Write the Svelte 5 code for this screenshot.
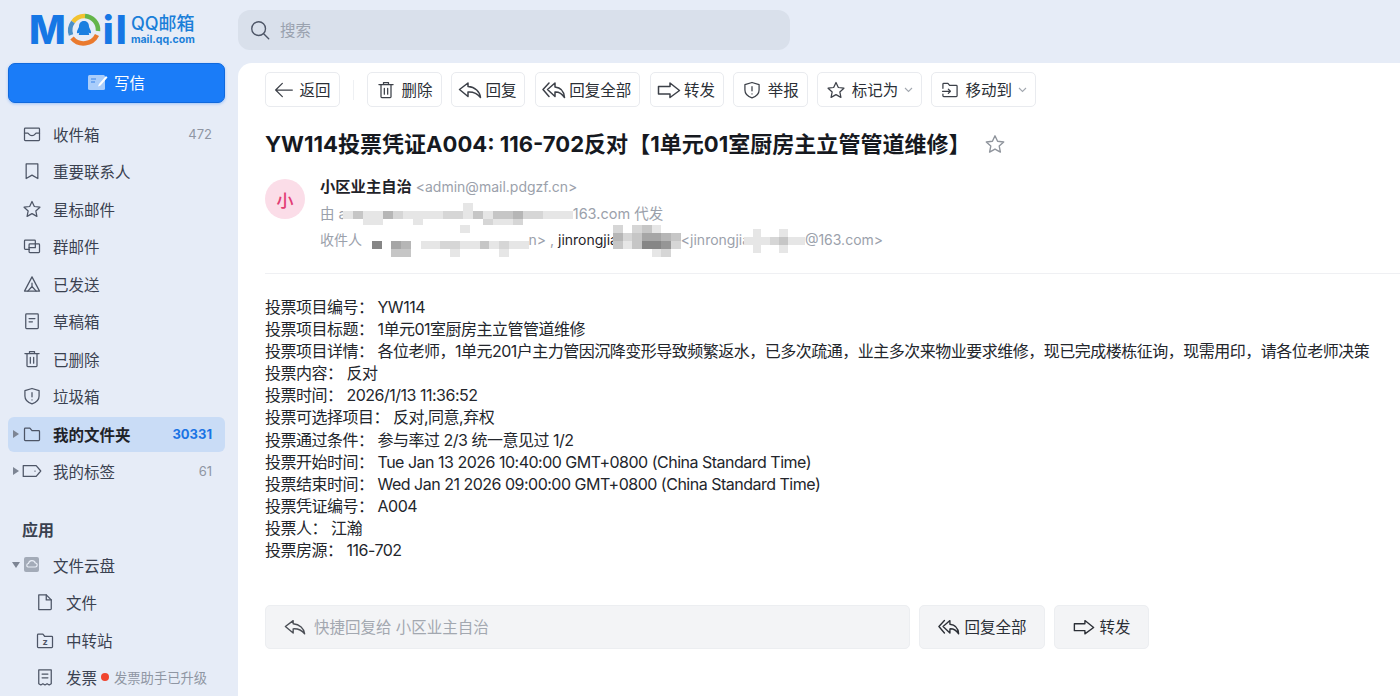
<script>
	const folders = [
		{ icon: "inbox", label: "收件箱", count: "472" },
		{ icon: "bookmark", label: "重要联系人" },
		{ icon: "star", label: "星标邮件" },
		{ icon: "group", label: "群邮件" },
		{ icon: "sent", label: "已发送" },
		{ icon: "draft", label: "草稿箱" },
		{ icon: "trash", label: "已删除" },
		{ icon: "shield", label: "垃圾箱" },
		{ icon: "folder", label: "我的文件夹", count: "30331", active: true, caret: "right" },
		{ icon: "tag", label: "我的标签", count: "61", caret: "right" },
	];

	const tools = [
		{ icon: "trash", label: "删除" },
		{ icon: "reply", label: "回复", wide: true },
		{ icon: "replyAll", label: "回复全部", wide: true },
		{ icon: "forward", label: "转发", wide: true },
		{ icon: "shield", label: "举报" },
		{ icon: "star", label: "标记为", menu: true },
		{ icon: "move", label: "移动到", menu: true },
	];

	const lines = [
		"投票项目编号： YW114",
		"投票项目标题： 1单元01室厨房主立管管道维修",
		"投票项目详情： 各位老师，1单元201户主力管因沉降变形导致频繁返水，已多次疏通，业主多次来物业要求维修，现已完成楼栋征询，现需用印，请各位老师决策",
		"投票内容： 反对",
		"投票时间： 2026/1/13 11:36:52",
		"投票可选择项目： 反对,同意,弃权",
		"投票通过条件： 参与率过 2/3 统一意见过 1/2",
		"投票开始时间： Tue Jan 13 2026 10:40:00 GMT+0800 (China Standard Time)",
		"投票结束时间： Wed Jan 21 2026 09:00:00 GMT+0800 (China Standard Time)",
		"投票凭证编号： A004",
		"投票人： 江瀚",
		"投票房源： 116-702",
	];

	// privacy blur blocks, one digit per cell = darkness
	const blurA = [
		"00000000000010000000000",
		"13114211112213133422111",
		"00110001000000211200000",
	];
	const blurB = [
		"00000000001000000",
		"00000000000000000",
		"07054011221131211",
		"00033000010000100",
	];
	const blurC = [
		"2023100",
		"4235543",
		"3137762",
		"0000120",
	];
	const blurD = [
		"0100100",
		"1112311",
		"0100100",
	];

	const shade = (cell) => {
		const v = cell === "0" ? 255 : 246 - cell * 16;
		return `rgb(${v}, ${v}, ${v})`;
	};
</script>

{#snippet icon(name, size = 20)}
	<svg class="icon" width={size} height={size} viewBox="0 0 24 24" fill="none" stroke="currentColor" stroke-width="1.500" stroke-linejoin="round" stroke-linecap="round">
		{#if name === "inbox"}
			<rect x="3" y="5" width="18" height="15" rx="1" />
			<path d="M3 11h4c1 0 1.500 3 5 3s4-3 5-3h4" />
		{:else if name === "bookmark"}
			<path d="M5 3.500h14V21l-7-4-7 4z" />
		{:else if name === "star"}
			<path d="M12 3l2.800 6 6.700.8-4.900 4.500 1.300 6.500L12 17.500 6.100 20.800l1.300-6.500L2.500 9.800 9.200 9z" />
		{:else if name === "group"}
			<path d="M9 16H4a1 1 0 0 1-1-1V6a1 1 0 0 1 1-1h11a1 1 0 0 1 1 1v3" />
			<rect x="8.500" y="9.500" width="12.500" height="10.500" rx="1" />
			<path d="M8.500 14H16V9.500" />
		{:else if name === "sent"}
			<path d="M12 3.500l9 17H3z" />
			<path d="M12 11v4l-5 5.500M12 15l5 5.500" />
		{:else if name === "draft"}
			<rect x="4.500" y="3.500" width="15" height="17.500" rx="1" />
			<path d="M8.500 9h7M8.500 13h4" />
		{:else if name === "trash"}
			<path d="M3.500 5.500h17M9 5.500V3h6v2.500M6 5.500V20a1 1 0 0 0 1 1h10a1 1 0 0 0 1-1V5.500M10 10v7M14 10v7" />
		{:else if name === "shield"}
			<path d="M12 3l8.500 2.500V12c0 5-4 8-8.500 9.500C7.500 20 3.500 17 3.500 12V5.500z" />
			<path d="M12 8v5M12 16.500v.2" />
		{:else if name === "folder"}
			<path d="M3 6a1 1 0 0 1 1-1h5.500l2.500 3h8a1 1 0 0 1 1 1v10a1 1 0 0 1-1 1H4a1 1 0 0 1-1-1z" />
		{:else if name === "tag"}
			<path d="M1.500 5.500h15.500l5.500 6.500-5.500 6.500H1.500z" />
			<path d="M15.500 12h.2" />
		{:else if name === "file"}
			<path d="M4.500 3.500h9l6 6V20a1 1 0 0 1-1 1h-14z" />
			<path d="M13.500 3.500v6h6" />
		{:else if name === "transfer"}
			<path d="M3 6a1 1 0 0 1 1-1h5.500l2 2.500H20a1 1 0 0 1 1 1V20a1 1 0 0 1-1 1H4a1 1 0 0 1-1-1z" />
			<text x="12" y="18.500" text-anchor="middle" font-size="11" font-weight="700" fill="currentColor" stroke="none" font-family="Inter, sans-serif">z</text>
		{:else if name === "receipt"}
			<path d="M4.500 3.500h15V20l-2.500 1.500-2.500-1.500-2.500 1.500L9.500 20 7 21.500 4.500 20z" />
			<path d="M8.500 8.500h7M8.500 13h7" />
		{:else if name === "back"}
			<path d="M22 12H2M10 4l-8 8 8 8" />
		{:else if name === "reply"}
			<path d="M10 5 1.500 11.500l8.500 7v-4.500c5-.3 9 1 12.500 5.500C22 13.500 17 9 10 8.500z" />
		{:else if name === "replyAll"}
			<path d="M7 5 1 11.500l6 7" />
			<path d="M13 5 5.500 11.500l7.500 7v-4.500c4-.3 6.500 1 9.500 5.500-.5-6-4-10-9.500-10.500z" />
		{:else if name === "forward"}
			<path d="M1.500 8.500H13V5l9.500 7.500L13 19.500v-3.500H1.500z" />
		{:else if name === "move"}
			<path d="M3.500 10V5a1 1 0 0 1 1-1h5l2 2.500h8a1 1 0 0 1 1 1V19a1 1 0 0 1-1 1h-15a1 1 0 0 1-1-1v-2" />
			<path d="M3 13.500h9.500M10 11l2.500 2.500L10 16" />
		{:else if name === "search"}
			<circle cx="10.500" cy="10.500" r="7.500" />
			<path d="M16 16l5.500 5.500" />
		{/if}
	</svg>
{/snippet}

{#snippet mosaic(rows, w = 10, over = 0)}
	<span class="mosaic" style="grid-template-columns: repeat({rows[0].length}, {w}px); margin-left: {-over}px">
		{#each rows as row}
			{#each row.split("") as cell}
				<i style="background: {shade(cell)}"></i>
			{/each}
		{/each}
	</span>
{/snippet}

{#snippet row(item, cls = "")}
	<div class="row {cls}" class:active={item.active}>
		<span class="caret {item.caret ?? ''}"></span>
		{@render icon(item.icon, 20)}
		<span class="label">{item.label}</span>
		{#if item.count}<span class="count">{item.count}</span>{/if}
	</div>
{/snippet}

<div class="page">
	<aside class="side">
		<div class="logo">
			<span class="word">M</span>
			<svg class="ring" width="36" height="36" viewBox="0 0 36 36" fill="none" stroke-width="4.500">
				<path d="M7 10A14 14 0 0 1 19 4" stroke="#f2c230" />
				<path d="M19 4A14 14 0 0 1 32 19" stroke="#64b54a" />
				<path d="M31 23A15 15 0 0 1 6 26" stroke="#ea7a2e" />
				<path d="M5 23A14 14 0 0 1 7 10" stroke="#4a90c8" />
				<path d="M18 9c3.500 0 5 2.500 5 5.500 0 1.500 2.500 4 2 6.500-1 .5-2 0-2.500-.5.500 1 1 2 .5 2.500H13c-.5-.5 0-1.500.5-2.500-.5.5-1.500 1-2.500.5-.5-2.500 2-5 2-6.500C13 11.500 14.500 9 18 9z" fill="#1b7fe0" stroke="none" />
			</svg>
			<span class="word il">il</span>
			<div class="brand">
				<span class="cn">QQ邮箱</span>
				<span class="en">mail.qq.com</span>
			</div>
		</div>

		<button class="compose">
			<svg width="20" height="18" viewBox="0 0 20 18">
				<rect x="0" y="1" width="17" height="15" rx="1.500" fill="#a9cdfb" />
				<path d="M3 5h5M3 8h4" stroke="#5d9cf0" stroke-width="1.500" />
				<path d="M18 2l1.500 1.500-7 8-2.500 1 1-2.500z" fill="#fff" />
			</svg>
			<span>写信</span>
		</button>

		<nav class="folders">
			{#each folders as f}
				{@render row(f)}
			{/each}
		</nav>

		<h3>应用</h3>
		<div class="row">
			<span class="caret down"></span>
			<svg class="icon" width="20" height="20" viewBox="0 0 20 20">
				<rect x="2" y="2" width="15" height="15" rx="2" fill="#a3abb8" />
				<path d="M6 12h7a2 2 0 0 0 .3-4A3.500 3.500 0 0 0 6.500 8.500 1.800 1.800 0 0 0 6 12z" fill="none" stroke="#e8edf6" stroke-width="1.200" />
			</svg>
			<span class="label">文件云盘</span>
		</div>
		{@render row({ icon: "file", label: "文件" }, "sub")}
		{@render row({ icon: "transfer", label: "中转站" }, "sub")}
		<div class="row sub">
			<span class="caret"></span>
			{@render icon("receipt", 20)}
			<span class="label">发票</span>
			<span class="dot"></span>
			<span class="note">发票助手已升级</span>
		</div>
	</aside>

	<div class="right">
		<header class="top">
			<div class="search">
				{@render icon("search", 22)}
				<span>搜索</span>
			</div>
		</header>

		<main class="panel">
			<div class="toolbar">
				<button class="tool">{@render icon("back")}<span class="txt">返回</span></button>
				<span class="sep"></span>
				{#each tools as t}
					<button class="tool" class:wide={t.wide}>
						{@render icon(t.icon, t.wide ? 24 : 20)}<span class="txt">{t.label}</span>
						{#if t.menu}<svg class="chev" width="9" height="6" viewBox="0 0 9 6" fill="none" stroke="#a3a8b0" stroke-width="1.100"><path d="M1 1l3.500 3.500L8 1" /></svg>{/if}
					</button>
				{/each}
			</div>

			<div class="subject">
				<h1>YW114投票凭证A004: 116-702反对【1单元01室厨房主立管管道维修】</h1>
				<span class="fav">{@render icon("star", 22)}</span>
			</div>

			<div class="meta">
				<div class="avatar">小</div>
				<div class="who">
					<div><b>小区业主自治</b> <span class="grey">&lt;admin@mail.pdgzf.cn&gt;</span></div>
					<div class="grey second">由 a{@render mosaic(blurA, 10, 4)}163.com 代发</div>
					<div class="grey">收件人{@render mosaic(blurB, 9.800)}n&gt; , <span class="dark">jinrongjia</span>{@render mosaic(blurC, 9.700, 5)}&lt;jinrongjia{@render mosaic(blurD, 8.700, 6)}@163.com&gt;</div>
				</div>
			</div>

			<div class="mailbody">
				{#each lines as line}
					<p>{line}</p>
				{/each}
			</div>

			<div class="quick">
				<div class="quickinput">{@render icon("reply", 22)}<span>快捷回复给 小区业主自治</span></div>
				<button class="qbtn">{@render icon("replyAll", 22)}<span class="txt">回复全部</span></button>
				<button class="qbtn">{@render icon("forward", 22)}<span class="txt">转发</span></button>
			</div>
		</main>
	</div>
</div>

<style>
	:global(body) {
		margin: 0;
		background: #e6ecf7;
		font-family: Inter, "Noto Sans CJK SC", sans-serif;
		color: #1f2329;
	}
	.page {
		display: grid;
		grid-template-columns: 238px 1fr;
		height: 696px;
		overflow: hidden;
	}
	.icon {
		flex: none;
	}
	button {
		font: inherit;
		color: inherit;
		cursor: pointer;
	}
	.txt {
		padding-bottom: 2px;
	}

	.side {
		overflow: hidden;
	}
	.logo {
		display: flex;
		align-items: center;
		height: 63px;
		padding: 0 0 4px 29px;
		box-sizing: border-box;
		color: #1677e5;
	}
	.word {
		font-size: 39px;
		font-weight: 800;
		line-height: 1;
		letter-spacing: -1px;
	}
	.il {
		letter-spacing: 2px;
		margin-left: 2px;
	}
	.ring {
		margin: 0 -1px 0 1px;
	}
	.brand {
		display: flex;
		flex-direction: column;
		margin-left: 2px;
		line-height: 1;
		color: #1a7fd9;
	}
	.cn {
		font-size: 18px;
		line-height: 20px;
		font-weight: 500;
	}
	.en {
		font-size: 10.500px;
		font-weight: 700;
		line-height: 11px;
	}
	.compose {
		display: flex;
		align-items: center;
		justify-content: center;
		gap: 6px;
		width: 217px;
		height: 40px;
		margin: 0 8px 12px;
		border: 1px solid #1069dd;
		border-radius: 7px;
		background: #1a7cf8;
		color: #fff;
		font-size: 15.500px;
		box-shadow: 0 1px 3px rgba(22, 119, 255, 0.35);
	}
	.compose span {
		padding-bottom: 3px;
	}
	.row {
		display: flex;
		align-items: center;
		height: 37.500px;
		margin: 0 13px 0 8px;
		padding-right: 13px;
		border-radius: 6px;
		font-size: 15.500px;
		color: #3a4150;
	}
	.row .icon {
		color: #4d5566;
		margin-right: 11px;
	}
	.caret {
		flex: none;
		width: 0;
		height: 0;
		padding-left: 14px;
		box-sizing: border-box;
		position: relative;
	}
	.caret.right::after {
		content: "";
		position: absolute;
		left: 5px;
		top: -4px;
		border-left: 6px solid #7d8594;
		border-top: 4px solid transparent;
		border-bottom: 4px solid transparent;
	}
	.caret.down::after {
		content: "";
		position: absolute;
		left: 4px;
		top: -3px;
		border-top: 6px solid #7d8594;
		border-left: 4px solid transparent;
		border-right: 4px solid transparent;
	}
	.sub {
		padding-left: 13px;
	}
	.label {
		flex: 1;
		white-space: nowrap;
	}
	.sub:last-child .label {
		flex: none;
	}
	.count {
		font-size: 13px;
		color: #8f96a3;
	}
	.active {
		height: 35px;
		margin-top: 1.500px;
		margin-bottom: 1px;
		background: #c9dcf6;
	}
	.active .label {
		font-weight: 700;
		color: #1f2329;
	}
	.active .count {
		font-size: 13px;
		font-weight: 700;
		color: #1b74e4;
	}
	h3 {
		margin: 28px 0 4px 22px;
		font-size: 16px;
		line-height: 24px;
		font-weight: 700;
		color: #3a4150;
	}
	.dot {
		flex: none;
		width: 8px;
		height: 8px;
		margin-left: 4px;
		border-radius: 50%;
		background: #f0452f;
	}
	.note {
		margin-left: 5px;
		font-size: 13.300px;
		color: #8f96a3;
		white-space: nowrap;
	}

	.right {
		display: flex;
		flex-direction: column;
		min-width: 0;
	}
	.top {
		flex: none;
		height: 63px;
		padding-top: 10px;
		box-sizing: border-box;
	}
	.search {
		display: flex;
		align-items: center;
		gap: 9px;
		width: 552px;
		height: 40px;
		padding-left: 11px;
		box-sizing: border-box;
		border-radius: 12px;
		background: #d9e0eb;
		color: #4d5566;
		font-size: 15.500px;
	}
	.search span {
		color: #9aa2af;
		padding-bottom: 2px;
	}
	.panel {
		flex: 1;
		padding: 9px 0 0 27px;
		background: #fff;
		border-top-left-radius: 14px;
	}
	.toolbar {
		display: flex;
		align-items: center;
		height: 35px;
		gap: 9.300px;
	}
	.tool {
		display: flex;
		align-items: center;
		gap: 5.500px;
		height: 35px;
		padding: 0 8px;
		background: #fff;
		border: 1px solid #e9ebef;
		border-radius: 5px;
		font-size: 15.500px;
		color: #2b2f36;
		white-space: nowrap;
	}
	.tool .icon {
		color: #3c4048;
	}
	.tool.wide .icon {
		margin: 0 -2px;
	}
	.sep {
		width: 1px;
		height: 20px;
		margin: 0 4px;
		background: #eef0f3;
	}
	.subject {
		display: flex;
		align-items: center;
		height: 32px;
		margin-top: 21px;
	}
	h1 {
		margin: 0;
		font-size: 22.050px;
		line-height: 32px;
		font-weight: 700;
		color: #16191f;
		white-space: nowrap;
	}
	.fav {
		display: flex;
		margin-left: 13px;
		color: #8f949c;
	}
	.meta {
		display: flex;
		gap: 15px;
		height: 95px;
		margin-top: 19px;
		box-sizing: border-box;
		border-bottom: 1px solid #eff0f3;
	}
	.avatar {
		flex: none;
		display: flex;
		align-items: center;
		justify-content: center;
		width: 40px;
		height: 40px;
		border-radius: 50%;
		background: #fbdde8;
		color: #e23c74;
		font-size: 17px;
		font-weight: 500;
	}
	.who {
		margin-top: -5px;
		font-size: 14px;
		line-height: 26.500px;
		white-space: nowrap;
	}
	.who b {
		font-size: 15.300px;
		font-weight: 600;
	}
	.grey {
		color: #9ba1ab;
	}
	.second {
		font-size: 14.500px;
	}
	.dark {
		color: #1f2329;
	}
	.mosaic {
		display: inline-grid;
		grid-auto-rows: 8px;
		vertical-align: middle;
		margin-block: -8px;
	}
	.mosaic i {
		display: block;
	}
	.mailbody {
		margin-top: 22px;
		font-size: 16px;
		letter-spacing: -0.500px;
		line-height: 22.100px;
		color: #23262c;
		white-space: nowrap;
	}
	.mailbody p {
		margin: 0;
	}
	.quick {
		display: flex;
		gap: 9px;
		margin-top: 44px;
	}
	.quickinput {
		display: flex;
		align-items: center;
		gap: 8px;
		width: 645px;
		height: 44px;
		padding-left: 18px;
		box-sizing: border-box;
		background: #f3f4f6;
		border: 1px solid #eceef1;
		border-radius: 5px;
		font-size: 15.500px;
		color: #4a4e55;
	}
	.quickinput span {
		color: #a3a8b0;
		padding-bottom: 2px;
	}
	.qbtn {
		display: flex;
		align-items: center;
		justify-content: center;
		gap: 5px;
		height: 44px;
		padding: 0 17.500px;
		background: #f3f4f6;
		border: 1px solid #eceef1;
		border-radius: 5px;
		font-size: 15.500px;
		color: #2b2f36;
	}
</style>
